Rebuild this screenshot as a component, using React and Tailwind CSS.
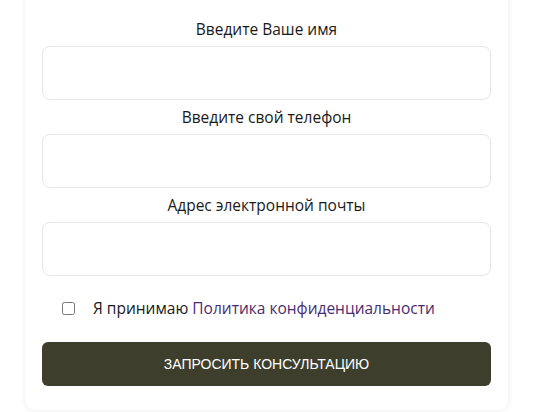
export default function App() {
  const fields = ["Введите Ваше имя", "Введите свой телефон", "Адрес электронной почты"];
  return (
    <div className="w-[534px] h-[412px] overflow-hidden bg-white" style={{ fontFamily: '"Open Sans", "Noto Sans", sans-serif' }}>
      <div className="ml-[25px] -mt-[12px] w-[483px] rounded-[10px] bg-white px-[17px] pt-[30px] pb-[24px] shadow-[0_0_6px_rgba(0,0,0,0.08)]">
        <form className="flex flex-col">
          {fields.map((label) => (
            <div key={label} className="flex flex-col mb-[6px]">
              <label className="h-[24px] text-center text-[15.5px] leading-[23px] text-[#1a1a1a]">{label}</label>
              <input className="mt-[4px] h-[54px] w-full rounded-[8px] border border-[#e6e6e6] bg-white px-3 outline-none" />
            </div>
          ))}
          <div className="mt-[14px] flex h-[24px] items-center pl-[20px]">
            <input type="checkbox" className="m-0 h-[13px] w-[13px]" />
            <span className="ml-[18px] text-[15.5px] leading-[24px] text-[#1a1a1a]">
              Я принимаю <a className="text-[#4b2c6f]">Политика конфиденциальности</a>
            </span>
          </div>
          <button
            type="button"
            className="mt-[22px] h-[44px] w-[449px] self-center rounded-[6px] bg-[#3d3f2c] text-[14px] uppercase text-white"
            style={{ fontFamily: '"Liberation Sans", Arial, sans-serif' }}
          >
            Запросить консультацию
          </button>
        </form>
      </div>
    </div>
  );
}
